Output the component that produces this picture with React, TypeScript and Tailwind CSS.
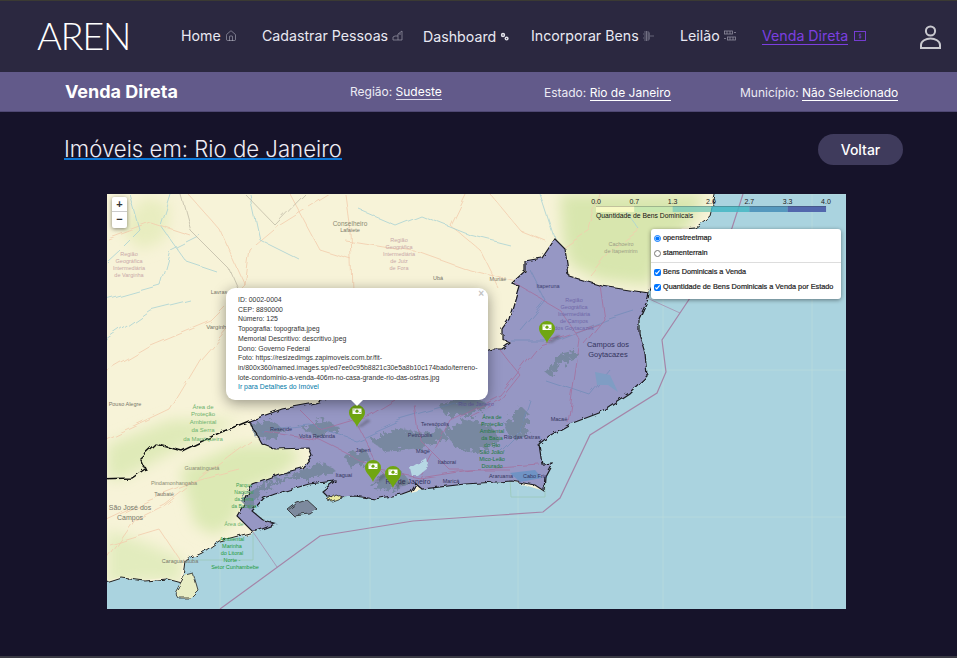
import type { ReactNode } from "react";
import { Home } from "lucide-react";

const inter = "font-['Inter',sans-serif]";
const leaflet = "font-['Liberation_Sans',sans-serif]";

const popupLines = [
  "ID: 0002-0004",
  "CEP: 8890000",
  "Número: 125",
  "Topografia: topografia.jpeg",
  "Memorial Descritivo: descritivo.jpeg",
  "Dono: Governo Federal",
  "Foto: https://resizedimgs.zapimoveis.com.br/fit-",
  "in/800x360/named.images.sp/ed7ee0c95b8821c30e5a8b10c174bado/terreno-",
  "lote-condominio-a-venda-406m-no-casa-grande-rio-das-ostras.jpg",
];

const landPath =
  "M95 182 L716 182 L708 215 L693 227 L682 228 L670 245 L655 270 L648 290 L646 298 L637 318 L637 332 L643 352 L645 375 L627 392 L597 412 L568 423 L547 435 L537 443 L540 463 L550 462 L543 475 L542 490 L510 480 L463 483 L420 488 L400 493 L373 498 L353 495 L327 497 L320 490 L333 480 L307 483 L273 493 L262 497 L250 510 L262 520 L273 523 L255 530 L253 532 L217 540 L200 552 L183 560 L180 582 L165 578 L143 580 L120 577 L95 585 Z";

const statePath =
  "M553 238 L563 248 L565 262 L567 275 L600 285 L633 290 L647 292 L646 298 L637 318 L637 332 L643 352 L645 375 L627 392 L597 412 L568 423 L547 435 L537 443 L540 463 L550 462 L543 475 L542 490 L533 484 L510 480 L463 483 L420 488 L413 482 L408 490 L400 493 L373 498 L353 495 L327 497 L320 490 L333 480 L307 483 L273 493 L262 497 L250 510 L262 520 L273 523 L255 530 L250 530 L235 515 L242 503 L250 483 L277 473 L300 467 L310 455 L307 447 L273 448 L260 443 L247 420 L280 408 L313 402 L490 348 L500 348 L508 342 L500 338 L500 328 L507 318 L517 285 L510 282 L523 270 L523 260 L540 257 Z";

const forestPatches = [
  "M250 425 L272 420 L284 430 L270 440 L256 438 Z",
  "M370 440 L400 428 L425 435 L440 428 L448 438 L420 448 L385 452 Z",
  "M445 432 L465 420 L490 425 L500 440 L480 452 L455 448 Z",
  "M505 425 L520 405 L530 415 L525 435 L510 440 Z",
  "M240 500 L262 484 L298 472 L322 462 L335 470 L318 478 L290 478 L262 492 L250 510 Z",
  "M545 372 L560 355 L578 351 L578 357 L560 364 L552 378 Z",
  "M372 488 L385 472 L403 472 L410 484 L392 490 Z",
  "M345 455 L365 450 L372 462 L350 468 Z",
  "M440 405 L470 395 L490 405 L470 415 L445 415 Z",
  "M300 428 L325 420 L340 428 L320 438 Z",
];

const landRoads = [
  "M107 370 L150 345 L210 320 L245 285 L250 250 L280 225 L330 194",
  "M107 560 L135 520 L165 505 L210 470 L250 440",
  "M188 194 L220 230 L245 285",
  "M345 194 L350 230 L352 290",
  "M345 240 L420 252 L470 270 L517 282",
  "M465 194 L450 225 L480 250 L500 290",
  "M600 194 L590 230 L563 248",
  "M107 440 L170 410 L200 360 L226 330",
  "M107 238 L150 222 L190 235",
  "M290 194 L320 250 L352 260",
  "M490 194 L520 230 L545 240",
  "M640 230 L610 250 L590 275",
  "M107 520 L150 500 L200 480 L240 470",
  "M110 545 L160 530 L180 560",
];

const rivers = [
  "M130 194 L140 230 L120 250 L107 262",
  "M107 300 L160 285 L170 250 L200 235",
  "M250 194 L260 240 L300 260",
  "M420 215 L470 235 L510 245",
  "M540 194 L555 240",
  "M107 340 L150 310 L190 300",
  "M170 194 L160 225 L185 260 L215 270",
  "M360 210 L395 225 L420 215",
  "M625 210 L640 230",
];

const stateRoads = [
  "M262 430 L320 440 L380 470 L420 478 L470 470 L540 465",
  "M357 425 L380 470 L390 480",
  "M420 478 L450 420 L500 395 L540 345 L600 325",
  "M517 285 L560 310 L580 340 L568 423",
  "M600 285 L605 320 L585 345",
  "M300 410 L320 430 L370 415 L395 400",
  "M500 350 L520 375 L500 400 L470 415",
  "M415 405 L420 440 L450 470 L510 470",
];

const stateRivers = [
  "M260 430 L310 425 L355 440 L400 420 L470 400",
  "M510 340 L560 340 L610 320 L635 312",
  "M545 380 L590 395 L610 370",
  "M500 450 L520 430 L530 400",
  "M530 270 L545 300 L520 330",
];

const mapLabels: { x: number; y: number; t: string; c: string; s: number }[] = [
  { x: 350, y: 226, t: "Conselheiro", c: "#8a8a72", s: 6.5 },
  { x: 350, y: 232, t: "Lafaiete", c: "#77776a", s: 5.5 },
  { x: 399, y: 242, t: "Região", c: "#c9a8a8", s: 5.5 },
  { x: 399, y: 249, t: "Geográfica", c: "#c9a8a8", s: 5.5 },
  { x: 399, y: 256, t: "Intermediária", c: "#c9a8a8", s: 5.5 },
  { x: 399, y: 263, t: "de Juiz", c: "#c9a8a8", s: 5.5 },
  { x: 399, y: 270, t: "de Fora", c: "#c9a8a8", s: 5.5 },
  { x: 129, y: 256, t: "Região", c: "#c9a8a8", s: 5.5 },
  { x: 129, y: 263, t: "Geográfica", c: "#c9a8a8", s: 5.5 },
  { x: 129, y: 270, t: "Intermediária", c: "#c9a8a8", s: 5.5 },
  { x: 129, y: 277, t: "de Varginha", c: "#c9a8a8", s: 5.5 },
  { x: 438, y: 280, t: "Ubá", c: "#77776a", s: 5.5 },
  { x: 498, y: 281, t: "Muriaé", c: "#77776a", s: 5.5 },
  { x: 218, y: 329, t: "Varginha", c: "#77776a", s: 6 },
  { x: 219, y: 294, t: "Lavras", c: "#77776a", s: 5.5 },
  { x: 125, y: 406, t: "Pouso Alegre", c: "#77776a", s: 5.5 },
  { x: 203, y: 409, t: "Área de", c: "#6db26d", s: 6 },
  { x: 203, y: 416, t: "Proteção", c: "#6db26d", s: 6 },
  { x: 203, y: 424, t: "Ambiental", c: "#6db26d", s: 6 },
  { x: 203, y: 432, t: "da Serra", c: "#6db26d", s: 6 },
  { x: 203, y: 441, t: "da Mantiqueira", c: "#6db26d", s: 6 },
  { x: 202, y: 470, t: "Guaratinguetá", c: "#8a8a72", s: 5.5 },
  { x: 174, y: 485, t: "Pindamonhangaba", c: "#8a8a72", s: 5.5 },
  { x: 164, y: 496, t: "Taubaté", c: "#77776a", s: 5.5 },
  { x: 130, y: 510, t: "São José dos", c: "#77776a", s: 7 },
  { x: 130, y: 520, t: "Campos", c: "#77776a", s: 7 },
  { x: 180, y: 563, t: "Caraguatatuba", c: "#77776a", s: 5.5 },
  { x: 234, y: 526, t: "Área de", c: "#6db26d", s: 5.5 },
  { x: 232, y: 541, t: "Ambiental", c: "#1f9c3a", s: 5.5 },
  { x: 232, y: 548, t: "Marinha", c: "#1f9c3a", s: 5.5 },
  { x: 232, y: 555, t: "do Litoral", c: "#1f9c3a", s: 5.5 },
  { x: 232, y: 562, t: "Norte -", c: "#1f9c3a", s: 5.5 },
  { x: 235, y: 569, t: "Setor Cunhambebe", c: "#1f9c3a", s: 5.5 },
  { x: 244, y: 487, t: "Parque", c: "#3f9f55", s: 5 },
  { x: 244, y: 494, t: "Nacional", c: "#3f9f55", s: 5 },
  { x: 244, y: 501, t: "da Serra", c: "#3f9f55", s: 5 },
  { x: 244, y: 508, t: "da Bocaina", c: "#3f9f55", s: 5 },
  { x: 621, y: 246, t: "Cachoeiro", c: "#9c9c84", s: 5.5 },
  { x: 621, y: 253, t: "de Itapemirim", c: "#9c9c84", s: 5.5 },
  { x: 548, y: 288, t: "Itaperuna", c: "#3c3c70", s: 5.5 },
  { x: 574, y: 302, t: "Região", c: "#7068a8", s: 5.5 },
  { x: 574, y: 309, t: "Geográfica", c: "#7068a8", s: 5.5 },
  { x: 574, y: 316, t: "Intermediária", c: "#7068a8", s: 5.5 },
  { x: 574, y: 323, t: "de Campos", c: "#7068a8", s: 5.5 },
  { x: 574, y: 330, t: "dos Goytacazes", c: "#7068a8", s: 5.5 },
  { x: 608, y: 347, t: "Campos dos", c: "#34345e", s: 7.5 },
  { x: 608, y: 357, t: "Goytacazes", c: "#34345e", s: 7.5 },
  { x: 559, y: 421, t: "Macaé", c: "#34345e", s: 5.5 },
  { x: 281, y: 431, t: "Resende", c: "#34345e", s: 5.5 },
  { x: 317, y: 438, t: "Volta Redonda", c: "#34345e", s: 5.5 },
  { x: 363, y: 452, t: "Japeri", c: "#34345e", s: 5.5 },
  { x: 344, y: 477, t: "Itaguaí", c: "#34345e", s: 5.5 },
  { x: 420, y: 437, t: "Petrópolis", c: "#34345e", s: 5.5 },
  { x: 435, y: 426, t: "Teresópolis", c: "#34345e", s: 5.5 },
  { x: 476, y: 406, t: "Rio de Janeiro", c: "#6a60a8", s: 5.5 },
  { x: 423, y: 453, t: "Magé", c: "#34345e", s: 5.5 },
  { x: 447, y: 464, t: "Itaboraí", c: "#34345e", s: 5.5 },
  { x: 451, y: 483, t: "Maricá", c: "#34345e", s: 5.5 },
  { x: 408, y: 484, t: "Rio de Janeiro", c: "#34345e", s: 7 },
  { x: 522, y: 439, t: "Rio das Ostras", c: "#34345e", s: 5.5 },
  { x: 501, y: 478, t: "Araruama", c: "#34345e", s: 5.5 },
  { x: 535, y: 478, t: "Cabo Frio", c: "#34345e", s: 5.5 },
  { x: 492, y: 419, t: "Área de", c: "#1c7a3c", s: 5.5 },
  { x: 492, y: 426, t: "Proteção", c: "#1c7a3c", s: 5.5 },
  { x: 492, y: 433, t: "Ambiental", c: "#1c7a3c", s: 5.5 },
  { x: 492, y: 440, t: "da Bacia", c: "#1c7a3c", s: 5.5 },
  { x: 492, y: 447, t: "do Rio", c: "#1c7a3c", s: 5.5 },
  { x: 492, y: 454, t: "São João/", c: "#1c7a3c", s: 5.5 },
  { x: 492, y: 461, t: "Mico-Leão", c: "#1c7a3c", s: 5.5 },
  { x: 492, y: 468, t: "Dourado", c: "#1c7a3c", s: 5.5 },
];

const scaleColors = ["#fdfbc8", "#c5e7b0", "#80cdba", "#45b6c4", "#478db8", "#4354a4"];
const scaleTicks = ["0.0", "0.7", "1.3", "2.0", "2.7", "3.3", "4.0"];

function Marker({ x, y }: { x: number; y: number }) {
  return (
    <g transform={`translate(${x} ${y})`}>
      <path d="M0 22 L10 14 L14 16 L5 22 Z" fill="#333" opacity="0.3" filter="url(#soft)" />
      <path
        d="M0 22 C-2 16 -8 13 -8 7.5 A8 7.5 0 0 1 8 7.5 C8 13 2 16 0 22 Z"
        fill="#70a611"
      />
      <rect x="-4.5" y="3.5" width="9" height="5.5" fill="#fff" />
      <circle cx="0" cy="6.2" r="1.6" fill="#70a611" />
      <rect x="-3.6" y="4.4" width="1" height="1" fill="#70a611" />
      <rect x="2.6" y="7" width="1" height="1" fill="#70a611" />
    </g>
  );
}

function MapDrawing() {
  return (
    <svg
      className={`absolute inset-0 ${leaflet}`}
      width="739"
      height="415"
      viewBox="107 194 739 415"
    >
      <defs>
        <filter id="rough" x="-5%" y="-5%" width="110%" height="110%">
          <feTurbulence type="fractalNoise" baseFrequency="0.12" numOctaves="3" seed="4" />
          <feDisplacementMap in="SourceGraphic" scale="5" />
        </filter>
        <filter id="rougher" x="-20%" y="-20%" width="140%" height="140%">
          <feTurbulence type="fractalNoise" baseFrequency="0.2" numOctaves="3" seed="9" />
          <feDisplacementMap in="SourceGraphic" scale="12" />
        </filter>
        <filter id="wobble" x="-5%" y="-5%" width="110%" height="110%">
          <feTurbulence type="fractalNoise" baseFrequency="0.04" numOctaves="2" seed="2" />
          <feDisplacementMap in="SourceGraphic" scale="9" />
        </filter>
        <filter id="soft" x="-50%" y="-50%" width="200%" height="200%">
          <feGaussianBlur stdDeviation="1.2" />
        </filter>
        <filter id="wash" x="-30%" y="-30%" width="160%" height="160%">
          <feGaussianBlur stdDeviation="7" />
        </filter>
        <clipPath id="landClip">
          <path d={landPath} />
        </clipPath>
      </defs>

      <rect x="107" y="194" width="739" height="415" fill="#aad3df" />
      {/* grade da base */}
      <g stroke="#bcdcdc" strokeWidth="0.7" fill="none">
        <path d="M220 530 V609 M370 500 V609 M518 490 V609 M663 298 V609 M812 194 V609" />
        <path d="M260 517 H846 M640 370 H846 M720 194 H846" />
      </g>
      <path d="M510 480 H545 V497 H511 Z" fill="none" stroke="#9cc9b8" strokeWidth="0.8" />
      <path d="M190 560 H253 V532 M322 482 L345 498" fill="none" stroke="#9cc9b8" strokeWidth="0.8" />

      <g transform="translate(2 1)">
        <path d={landPath} fill="#f7f3d8" filter="url(#rough)" />
      </g>
      <g clipPath="url(#landClip)">
        <g filter="url(#wash)">
          <path d="M560 194 H705 L690 225 L660 255 L650 285 L600 280 L570 265 L563 240 Z" fill="#d8e6ae" />
          <path d="M180 470 L235 445 L290 445 L300 458 L280 475 L245 490 L235 520 L215 535 L195 525 Z" fill="#dce9b4" />
          <path d="M107 445 L170 420 L240 420 L180 448 L120 480 L107 478 Z" fill="#dfeab8" />
          <path d="M107 530 L150 545 L183 560 L180 582 L143 580 L107 585 Z" fill="#e2ecbe" />
          <path d="M145 196 L170 205 L165 240 L140 250 L120 228 Z" fill="#e8edc0" />
        </g>
      </g>

      <g fill="none" stroke="#f2ccac" strokeWidth="0.8" filter="url(#wobble)">
        {landRoads.map((d) => (
          <path key={d} d={d} />
        ))}
      </g>
      <g fill="none" stroke="#a8d2d4" strokeWidth="0.8" filter="url(#wobble)">
        {rivers.map((d) => (
          <path key={d} d={d} />
        ))}
      </g>
      <path
        d="M180 194 L190 230 L230 270 L243 300 M245 194 L275 225 L305 194"
        fill="none"
        stroke="#b9b3a0"
        strokeWidth="0.7"
        filter="url(#wobble)"
      />

      {/* estado com a camada de quantidade */}
      <g transform="translate(2 1)">
        <path d={statePath} fill="#9697c4" filter="url(#rough)" />
      </g>
      <g fill="#73869a" opacity="0.85" filter="url(#rougher)">
        {forestPatches.map((d) => (
          <path key={d} d={d} />
        ))}
      </g>
      <g fill="none" stroke="#6f8bb8" strokeWidth="0.7" filter="url(#wobble)">
        {stateRivers.map((d) => (
          <path key={d} d={d} />
        ))}
      </g>
      <g fill="none" stroke="#a5709d" strokeWidth="0.8" filter="url(#wobble)">
        {stateRoads.map((d) => (
          <path key={d} d={d} />
        ))}
      </g>
      <path d="M595 372 L610 375 L618 392 L608 385 L597 385 Z" fill="#7f9dc4" />
      <path d="M510 473 L535 470 L542 478 L520 482 Z" fill="#6f93c4" />
      <path d="M410 468 L426 458 L428 468 L418 476 L412 476 Z" fill="#b6d8e4" filter="url(#rough)" />
      <g transform="translate(2 1)">
        <path d={statePath} fill="none" stroke="#1b1b22" strokeWidth="1.2" filter="url(#rough)" />
      </g>

      <g transform="translate(2 1)">
        <g fill="none" filter="url(#rough)">
          <path
            d="M95 478 L130 477 L143 468 L138 457 L153 443 L165 446 L180 450 L217 432 L247 420"
            stroke="#111"
            strokeWidth="1.4"
          />
          <path
            d="M255 530 L217 540 L200 552 L183 560 L180 582 L165 578 L143 580 L120 577 L95 585"
            stroke="#222"
            strokeWidth="1"
          />
          <path d="M716 182 L708 215 L693 227 L682 228 L670 245 L655 270 L648 290" stroke="#222" strokeWidth="1" />
        </g>
      </g>

      {/* ilhas */}
      <g filter="url(#rough)" stroke="#222" strokeWidth="0.8">
        <path d="M288 510 L297 503 L307 500 L317 509 L310 514 L294 516 Z" fill="#7d8a9e" />
        <path d="M175 593 L185 575 L193 573 L198 590 L190 598 L178 598 Z" fill="#e8edc4" />
        <path d="M327 500 L335 494 L343 497 L332 501 Z" fill="#eaeaa0" />
      </g>

      {/* limite maritimo */}
      <g fill="none" stroke="#a585a8" strokeWidth="1.2">
        <path d="M743 194 L732 228 L690 298 L662 340 L666 372 L657 393 L590 435 L560 498 L543 512 L500 515 L413 521 L320 536 L220 609" />
        <path d="M253 532 L277 567 M647 298 L680 313" strokeWidth="0.7" />
      </g>

      <g textAnchor="middle">
        {mapLabels.map((l) => (
          <text key={`${l.t}-${l.x}-${l.y}`} x={l.x} y={l.y} fill={l.c} fontSize={l.s}>
            {l.t}
          </text>
        ))}
      </g>

      <Marker x={547} y={321} />
      <Marker x={357} y={405} />
      <Marker x={373} y={460} />
      <Marker x={393} y={466} />

      {/* legenda */}
      {scaleColors.map((c, i) => (
        <rect key={c} x={596 + i * 38.33} y="206" width="38.4" height="6" fill={c} opacity="0.85" />
      ))}
      <rect x="596" y="206" width="230" height="0.6" fill="#333" opacity="0.45" />
      <g fontSize="7" fill="#222" textAnchor="middle">
        {scaleTicks.map((t, i) => (
          <text key={t} x={596 + i * 38.33} y="204">
            {t}
          </text>
        ))}
      </g>
      <text x="596" y="218" fontSize="6.8" fill="#111">
        Quantidade de Bens Dominicais
      </text>
    </svg>
  );
}

function Popup() {
  return (
    <div className={`absolute left-[119px] top-[94px] w-[262px] h-[112px] bg-white rounded-[9px] shadow-[0_3px_14px_rgba(0,0,0,0.4)] pl-[12px] pt-[7px] text-[6.9px] leading-[9.7px] text-[#333] ${leaflet}`}>
      <span className="absolute right-[4px] top-[1px] text-[10px] leading-[10px] font-bold text-[#c3c3c3]">×</span>
      {popupLines.map((line) => (
        <div key={line} className="whitespace-nowrap">
          {line}
        </div>
      ))}
      <div className="text-[#0078a8]">Ir para Detalhes do Imóvel</div>
      <div className="absolute left-[125px] top-[112px] w-0 h-0 border-l-[6px] border-r-[6px] border-t-[6px] border-l-transparent border-r-transparent border-t-white" />
    </div>
  );
}

function LayerControl() {
  const label = "whitespace-nowrap [-webkit-text-stroke:0.2px_#222]";
  return (
    <div className={`absolute left-[544px] top-[35px] w-[190px] h-[70px] bg-white rounded-[3px] shadow-[0_1px_4px_rgba(0,0,0,0.45)] text-[7.3px] text-[#222] pl-[3px] ${leaflet}`}>
      <label className="flex items-center gap-[2px] h-[15px] mt-[2px]">
        <input type="radio" name="base" defaultChecked className="w-[7px] h-[7px] m-0 accent-[#0075ff]" />
        <span className={label}>openstreetmap</span>
      </label>
      <label className="flex items-center gap-[2px] h-[15px]">
        <input type="radio" name="base" className="w-[7px] h-[7px] m-0" />
        <span className={label}>stamenterrain</span>
      </label>
      <div className="border-t border-[#ddd] -ml-[3px] mt-[1px]" />
      <label className="flex items-center gap-[2px] h-[15px] mt-[2px]">
        <input type="checkbox" defaultChecked className="w-[7px] h-[7px] m-0 accent-[#0075ff]" />
        <span className={label}>Bens Dominicais a Venda</span>
      </label>
      <label className="flex items-center gap-[2px] h-[15px]">
        <input type="checkbox" defaultChecked className="w-[7px] h-[7px] m-0 accent-[#0075ff]" />
        <span className={label}>Quantidade de Bens Dominicais a Venda por Estado</span>
      </label>
    </div>
  );
}

function NavLink({ label, className, children }: { label: string; className: string; children: ReactNode }) {
  return (
    <div className={`flex items-center gap-[4px] text-[14.2px] text-[#e9e8f2] whitespace-nowrap ${className}`}>
      {label}
      {children}
    </div>
  );
}

export default function App() {
  return (
    <div className={`min-h-[658px] flex flex-col bg-[#16132a] ${inter}`}>
      <div className="h-[1px] bg-[#3b3a33]" />
      <header className="h-[71px] flex items-center bg-[#2b2840] pl-[37px]">
        <span className="w-[92px] -mt-[3px] text-[38px] leading-none tracking-[-1.4px] font-light text-white font-['Lato',sans-serif]">
          AREN
        </span>
        <nav className="flex items-center ml-[52px] -mt-[1px]">
          <NavLink label="Home" className="w-[81px]">
            <Home size={12} strokeWidth={1} className="text-[#c9c8d4]" />
          </NavLink>
          <NavLink label="Cadastrar Pessoas" className="w-[161px]">
            <svg width="11" height="11" viewBox="0 0 11 11" fill="none" stroke="#8f8d9e" strokeWidth="0.8">
              <path d="M1 10 H10 V1 L6 4 V6 H3 L1 7 Z M6 6 V10 M8 3 V5" />
            </svg>
          </NavLink>
          <NavLink label="Dashboard" className="w-[108px] mt-[1px]">
            <svg width="9" height="9" viewBox="0 0 9 9" fill="#e5e4ec">
              <circle cx="3" cy="3" r="2.2" />
              <circle cx="6.6" cy="6.6" r="2" />
              <circle cx="3" cy="3" r="0.7" fill="#2b2840" />
              <circle cx="6.6" cy="6.6" r="0.6" fill="#2b2840" />
            </svg>
          </NavLink>
          <NavLink label="Incorporar Bens" className="w-[149px]">
            <svg width="11" height="12" viewBox="0 0 11 12" fill="none" stroke="#8f8d9e" strokeWidth="0.6">
              <path d="M1 2 H6 M0 4 H7 M1 6 H11 M0 8 H7 M1 10 H6 M3.5 1 V11 M6 2 V10" />
            </svg>
          </NavLink>
          <NavLink label="Leilão" className="w-[82px]">
            <svg width="12" height="11" viewBox="0 0 12 11" fill="none" stroke="#8f8d9e" strokeWidth="0.8">
              <rect x="0.5" y="1" width="8" height="3" />
              <rect x="3.5" y="7" width="8" height="3" />
              <path d="M3 1 V4 M6 1 V4 M6 7 V10 M9 7 V10 M10 2.5 H12 M0 8.5 H2" />
            </svg>
          </NavLink>
          <NavLink label="" className="w-[158px] !gap-[6px]">
            <span className="text-[#7c3fe0] border-b border-[#7c3fe0] leading-[17px]">Venda Direta</span>
            <svg width="12" height="10" viewBox="0 0 12 10" fill="none" stroke="#7c3fe0" strokeWidth="0.9">
              <rect x="0.5" y="0.5" width="11" height="9" />
              <path d="M7.2 3.6 C6.6 3 5 3 5 4.2 C5 5.4 7.2 4.8 7.2 6 C7.2 7 5.6 7 4.9 6.4 M6 2.4 V7.6" strokeWidth="0.6" />
            </svg>
          </NavLink>
        </nav>
        <svg width="21" height="24" viewBox="0 0 21 24" fill="none" stroke="#c9c9cf" strokeWidth="2" className="mt-[1px]">
          <circle cx="10.5" cy="6" r="4.6" />
          <path d="M1 23 V20 C1 16 6 13.5 10.5 13.5 C15 13.5 20 16 20 20 V23 Z" />
        </svg>
      </header>

      <div className="h-[40px] flex items-center bg-[#625a8a] pl-[65px] border-b border-[#4f4873]">
        <h2 className="w-[285px] text-[18px] font-bold text-white">Venda Direta</h2>
        <p className="w-[194px] text-[12px] text-[#ecebf4]">
          Região: <span className="border-b border-[#d9d7e8] text-white">Sudeste</span>
        </p>
        <p className="w-[196px] mt-[3px] text-[12px] text-[#ecebf4]">
          Estado: <span className="border-b border-white text-white">Rio de Janeiro</span>
        </p>
        <p className="mt-[3px] text-[12px] text-[#ecebf4]">
          Município: <span className="border-b border-white text-white">Não Selecionado</span>
        </p>
      </div>

      <div className="flex items-center justify-between pl-[64px] pr-[54px] pt-[22px]">
        <h1 className="text-[22.2px] leading-[18px] font-light text-[#eeedf5] border-b-2 border-[#0b78d8]">
          Imóveis em: Rio de Janeiro
        </h1>
        <button className="w-[85px] h-[31px] rounded-full bg-[#3f3b5c] text-[14px] font-medium text-white">
          Voltar
        </button>
      </div>

      <div className="relative ml-[107px] mt-[29px] w-[739px] h-[415px] overflow-hidden">
        <MapDrawing />
        <div className="absolute left-[5px] top-[3px] w-[15px] h-[31px] flex flex-col bg-white rounded-[2px] shadow-[0_1px_4px_rgba(0,0,0,0.45)] font-['Liberation_Sans',sans-serif] text-[#333] font-bold">
          <span className="h-[15px] flex items-center justify-center text-[11px] leading-none border-b border-[#ccc]">+</span>
          <span className="h-[15px] flex items-center justify-center text-[11px] leading-none">−</span>
        </div>
        <Popup />
        <LayerControl />
      </div>
      <div className="mt-auto h-[2px] bg-[#3a3a44]" />
    </div>
  );
}
